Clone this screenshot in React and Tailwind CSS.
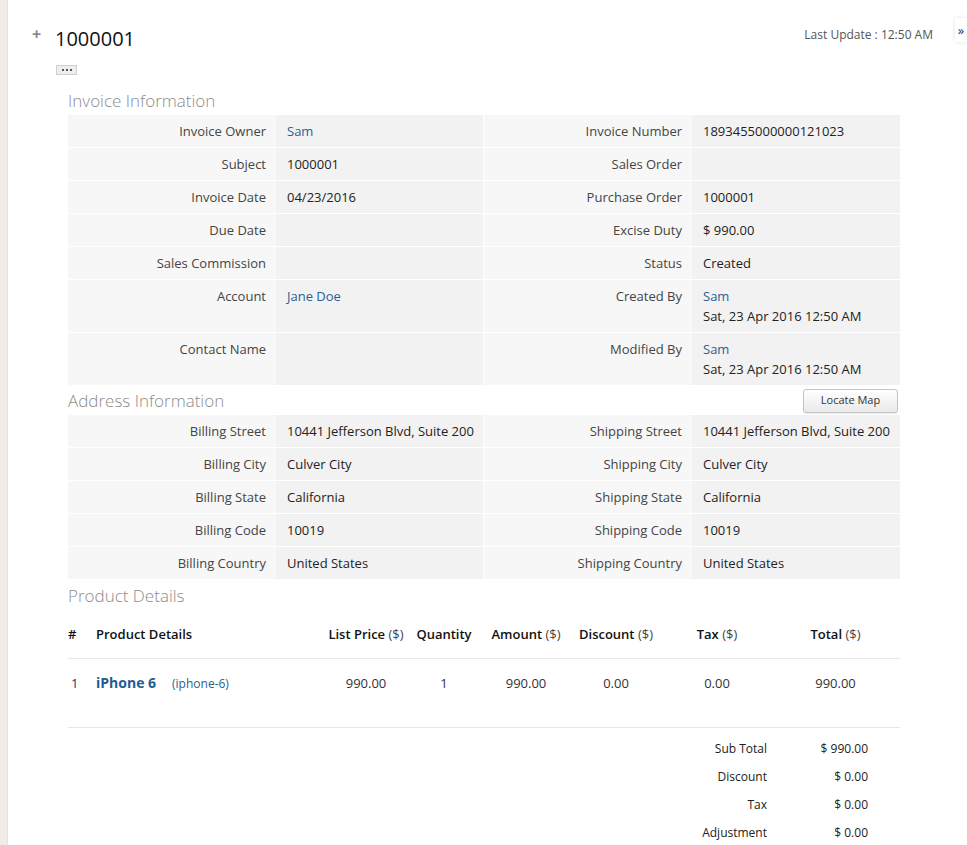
const invoiceRows = [
  [['Invoice Owner', 'Sam', 'link'], ['Invoice Number', '1893455000000121023']],
  [['Subject', '1000001'], ['Sales Order', '']],
  [['Invoice Date', '04/23/2016'], ['Purchase Order', '1000001']],
  [['Due Date', ''], ['Excise Duty', '$ 990.00']],
  [['Sales Commission', ''], ['Status', 'Created']],
  [['Account', 'Jane Doe', 'link'], ['Created By', 'Sam', 'user']],
  [['Contact Name', ''], ['Modified By', 'Sam', 'user']],
]

const addressRows = [
  [['Billing Street', '10441 Jefferson Blvd, Suite 200'], ['Shipping Street', '10441 Jefferson Blvd, Suite 200']],
  [['Billing City', 'Culver City'], ['Shipping City', 'Culver City']],
  [['Billing State', 'California'], ['Shipping State', 'California']],
  [['Billing Code', '10019'], ['Shipping Code', '10019']],
  [['Billing Country', 'United States'], ['Shipping Country', 'United States']],
]

const totals = [
  ['Sub Total', '$ 990.00'],
  ['Discount', '$ 0.00'],
  ['Tax', '$ 0.00'],
  ['Adjustment', '$ 0.00'],
]

const Value = ({ value, kind }) => {
  if (kind === 'link') return <span className='text-[#2b5f91]'>{value}</span>
  if (kind === 'user') return (
    <>
      <div className='text-[#2b5f91]'>{value}</div>
      <div className='text-[#222]'>Sat, 23 Apr 2016 12:50 AM</div>
    </>
  )
  return <span className='text-[#222]'>{value}</span>
}

const InfoTable = ({ rows }) => (
  <div>
    {rows.map((row, i) => (
      <div key={i} className='grid grid-cols-[208px_208px_208px_208px] border-b border-white'>
        {row.map(([label, value, kind], j) => (
          <div key={j} className='contents'>
            <div className='bg-[#f7f7f7] text-right pr-[10px] py-[6px] leading-[20px] text-[#444] whitespace-nowrap'>
              {label}
            </div>
            <div className={`bg-[#f2f2f2] pl-[11px] py-[6px] leading-[20px] whitespace-nowrap ${j === 0 ? 'border-r border-white' : ''}`}>
              <Value value={value} kind={kind} />
            </div>
          </div>
        ))}
      </div>
    ))}
  </div>
)

const Money = ({ title }) => (
  <span className='whitespace-nowrap'>
    <span className='font-semibold'>{title}</span> <span className='font-normal text-[#444]'>($)</span>
  </span>
)

export default function App() {
  return (
    <div className="min-h-screen flex bg-white font-['Open_Sans',sans-serif] text-[13px] text-[#222]">
      <div className='w-[8px] shrink-0 bg-[#f0ede9] border-r border-[#e6e2de]' />

      <div className='flex-1 relative'>
        {/* collapse tab */}
        <div className='absolute top-[18px] right-0 w-[12px] h-[24px] bg-white shadow-[0_0_4px_rgba(0,0,0,0.12)] flex items-center justify-center text-[13px] text-[#333] leading-none'>
          <span className='text-[#333]'>»</span>
        </div>

        {/* header */}
        <div className='flex justify-between pt-[26px] pl-[24px] pr-[34px]'>
          <div className='flex items-start'>
            <span className='text-[16px] font-bold leading-[14px] text-[#8a8a8a] w-[23px] pt-[1px]'>+</span>
            <h1 className='text-[20px] leading-[26px] text-[#111]'>1000001</h1>
          </div>
          <div className='text-[12px] text-[#555] leading-[16px] pt-[1px]'>Last Update : 12:50 AM</div>
        </div>

        <div className='pl-[48px] mt-[13px]'>
          <div className='w-[21px] h-[10px] bg-[#eeeeee] border border-[#cfcfcf] flex items-center justify-center gap-[2px]'>
            <span className='w-[2px] h-[2px] bg-[#555]' />
            <span className='w-[2px] h-[2px] bg-[#555]' />
            <span className='w-[2px] h-[2px] bg-[#555]' />
          </div>
        </div>

        <div className='ml-[60px] w-[832px]'>
          <h2 className='text-[17px] font-light leading-[28px] text-[#8c8c8c] mt-[12px]'>Invoice Information</h2>
          <InfoTable rows={invoiceRows} />

          <div className='flex items-center justify-between h-[29px]'>
            <h2 className='text-[17px] font-light text-[#8c8c8c]'>Address Information</h2>
            <button className='h-[24px] w-[95px] mr-[2px] rounded-[3px] border border-[#c4c4c4] bg-gradient-to-b from-white to-[#e9e9e9] text-[11px] text-[#333] shadow-[0_1px_1px_rgba(0,0,0,0.08)]'>
              Locate Map
            </button>
          </div>
          <InfoTable rows={addressRows} />

          <h2 className='text-[17px] font-light leading-[30px] text-[#8c8c8c] mt-[1px]'>Product Details</h2>

          <div className='grid grid-cols-[28px_231px_78px_78px_86px_94px_108px_129px] items-center h-[48px] pt-[1px] border-b border-[#e6e6e6] text-[#111]'>
            <div className='font-semibold'>#</div>
            <div className='font-semibold'>Product Details</div>
            <div className='text-center'><Money title='List Price' /></div>
            <div className='text-center font-semibold'>Quantity</div>
            <div className='text-center'><Money title='Amount' /></div>
            <div className='text-center'><Money title='Discount' /></div>
            <div className='text-center'><Money title='Tax' /></div>
            <div className='text-center'><Money title='Total' /></div>
          </div>

          <div className='grid grid-cols-[28px_231px_78px_78px_86px_94px_108px_129px] items-start h-[69px] pt-[14px] leading-[20px] border-b border-[#e6e6e6] text-[#333]'>
            <div className='pl-[3px] text-[#2b2b6b]'>1</div>
            <div className='whitespace-nowrap'>
              <span className='text-[14px] font-bold text-[#1f5c8f]'>iPhone 6</span>
              <span className='text-[12px] text-[#2b5f91] ml-[16px]'>(iphone-6)</span>
            </div>
            <div className='text-center'>990.00</div>
            <div className='text-center text-[#2b2b6b]'>1</div>
            <div className='text-center'>990.00</div>
            <div className='text-center'>0.00</div>
            <div className='text-center'>0.00</div>
            <div className='text-center'>990.00</div>
          </div>

          <div className='pt-[7px] pr-[32px] flex flex-col items-end text-[12px] text-[#222]'>
            {totals.map(([label, value]) => (
              <div key={label} className='flex h-[28px] items-center'>
                <div className='w-[120px] text-right'>{label}</div>
                <div className='w-[101px] text-right'>{value}</div>
              </div>
            ))}
          </div>
        </div>
      </div>
    </div>
  )
}
